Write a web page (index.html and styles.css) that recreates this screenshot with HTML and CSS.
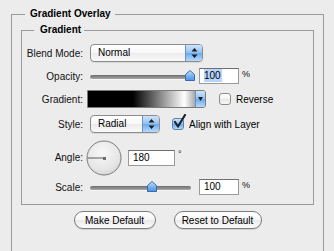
FILE: index.html
```html
<!DOCTYPE html>
<html lang="en">
<head>
    <meta charset="UTF-8">
    <meta name="viewport" content="width=device-width, initial-scale=1.0">
    <title>Gradient Overlay</title>
    <link rel="stylesheet" href="styles.css">
</head>
<body>
    <div class="group outer">
        <div class="legend">Gradient Overlay</div>
        <div class="group inner">
            <div class="legend">Gradient</div>

            <div class="row row-blend">
                <span class="label">Blend Mode:</span>
                <div class="popup popup-blend">
                    <span class="popup-text">Normal</span>
                    <span class="popup-arrows">
                        <svg width="7" height="10" viewBox="0 0 7 10"><path d="M3.5 0 L6.5 3.5 L0.5 3.5 Z M3.5 10 L6.5 6.5 L0.5 6.5 Z" fill="#1c1c1c"/></svg>
                    </span>
                </div>
            </div>

            <div class="row row-opacity">
                <span class="label">Opacity:</span>
                <div class="slider">
                    <div class="track"></div>
                    <svg class="thumb" style="left: 95px" width="10" height="11" viewBox="0 0 10 11">
                        <defs>
                            <linearGradient id="thumbA" x1="0" y1="0" x2="0" y2="1">
                                <stop offset="0" stop-color="#cfe5fb"/>
                                <stop offset="0.5" stop-color="#7db6f0"/>
                                <stop offset="1" stop-color="#4d95e6"/>
                            </linearGradient>
                        </defs>
                        <path d="M0.5 4.5 L5 0.5 L9.5 4.5 L9.5 10.5 L0.5 10.5 Z" fill="url(#thumbA)" stroke="#3d6aa6"/>
                    </svg>
                </div>
                <div class="field"><span class="selected">100</span></div>
                <span class="unit">%</span>
            </div>

            <div class="row row-gradient">
                <span class="label">Gradient:</span>
                <div class="swatch">
                    <div class="swatch-fill"></div>
                    <span class="swatch-arrow">
                        <svg width="5" height="4" viewBox="0 0 5 4"><path d="M0 0 L5 0 L2.5 4 Z" fill="#1c1c1c"/></svg>
                    </span>
                </div>
                <span class="check"></span>
                <span class="check-label">Reverse</span>
            </div>

            <div class="row row-style">
                <span class="label">Style:</span>
                <div class="popup popup-style">
                    <span class="popup-text">Radial</span>
                    <span class="popup-arrows">
                        <svg width="7" height="10" viewBox="0 0 7 10"><path d="M3.5 0 L6.5 3.5 L0.5 3.5 Z M3.5 10 L6.5 6.5 L0.5 6.5 Z" fill="#1c1c1c"/></svg>
                    </span>
                </div>
                <span class="check checked">
                    <svg width="15" height="16" viewBox="0 0 15 16"><path d="M3 8 L6 12.5 L13 1" fill="none" stroke="#1e2430" stroke-width="2.2" stroke-linecap="round" stroke-linejoin="round"/></svg>
                </span>
                <span class="check-label">Align with Layer</span>
            </div>

            <div class="row row-angle">
                <span class="label">Angle:</span>
                <svg class="dial" width="36" height="36" viewBox="0 0 36 36">
                    <defs>
                        <radialGradient id="dialFill" cx="0.45" cy="0.35" r="0.7">
                            <stop offset="0" stop-color="#f7f7f7"/>
                            <stop offset="0.7" stop-color="#e6e6e6"/>
                            <stop offset="1" stop-color="#d2d2d2"/>
                        </radialGradient>
                    </defs>
                    <circle cx="18" cy="18" r="17" fill="url(#dialFill)" stroke="#7c7c7c"/>
                    <line x1="1.5" y1="18" x2="18" y2="18" stroke="#5a5a5a"/>
                    <rect x="17" y="17" width="3" height="3" fill="#6e6e6e"/>
                </svg>
                <div class="field field-angle">180</div>
                <span class="degree">°</span>
            </div>

            <div class="row row-scale">
                <span class="label">Scale:</span>
                <div class="slider">
                    <div class="track"></div>
                    <svg class="thumb" style="left: 57px" width="10" height="11" viewBox="0 0 10 11">
                        <defs>
                            <linearGradient id="thumbB" x1="0" y1="0" x2="0" y2="1">
                                <stop offset="0" stop-color="#cfe5fb"/>
                                <stop offset="0.5" stop-color="#7db6f0"/>
                                <stop offset="1" stop-color="#4d95e6"/>
                            </linearGradient>
                        </defs>
                        <path d="M0.5 4.5 L5 0.5 L9.5 4.5 L9.5 10.5 L0.5 10.5 Z" fill="url(#thumbB)" stroke="#3d6aa6"/>
                    </svg>
                </div>
                <div class="field">100</div>
                <span class="unit">%</span>
            </div>
        </div>

        <div class="buttons">
            <button class="btn btn-make">Make Default</button>
            <button class="btn btn-reset">Reset to Default</button>
        </div>
    </div>
</body>
</html>
```

FILE: styles.css
```css
html, body {
    overflow: hidden;
}
body {
    margin: 0;
    background-color: #ececec;
    font-family: 'Liberation Sans', Arial, sans-serif;
    font-size: 10px;
    color: #111;
}
.group {
    border: 1px solid #9a9a9a;
}
.outer {
    margin: 14px 0 0 11px;
    width: 311px;
    height: 240px;
    border-bottom: none;
}
.inner {
    margin: 10px 9px 0 9px;
    padding-bottom: 9px;
}
.legend {
    width: fit-content;
    margin-top: -7px;
    line-height: 12px;
    font-weight: bold;
    color: #000;
    background-color: #ececec;
}
.outer > .legend {
    margin-left: 13px;
    padding: 0 4px 0 5px;
}
.inner > .legend {
    margin-left: 12px;
    padding: 0 3px 0 6px;
}
.row {
    display: flex;
    align-items: center;
}
.label {
    flex: none;
    width: 61px;
    text-align: right;
}
.row-blend {
    margin-top: 8px;
    height: 18px;
}
.row-opacity {
    margin-top: 6px;
    height: 16px;
}
.row-gradient {
    margin-top: 6px;
    height: 18px;
}
.row-style {
    margin-top: 7px;
    height: 18px;
}
.row-angle {
    margin-top: 7px;
    height: 35px;
}
.row-scale {
    margin-top: 4px;
    height: 16px;
}

/* popup buttons */
.popup {
    display: flex;
    height: 18px;
    box-sizing: border-box;
    margin-left: 7px;
    border: 1px solid #8c8c8c;
    border-radius: 4px;
    overflow: hidden;
    background: linear-gradient(#ffffff, #f7f7f7 50%, #ececec 51%, #f9f9f9);
    box-shadow: 0 1px 0 rgba(0, 0, 0, 0.08);
}
.popup-blend {
    width: 113px;
}
.popup-style {
    width: 70px;
}
.popup-text {
    flex: 1;
    padding-left: 7px;
    line-height: 16px;
    color: #000;
}
.popup-arrows {
    flex: none;
    width: 16px;
    display: flex;
    align-items: center;
    justify-content: center;
    border-left: 1px solid #6f8fbd;
    background: linear-gradient(#cfe4fa, #8fc0f3 50%, #6aa9ee 51%, #b7dafd);
}

/* sliders */
.slider {
    position: relative;
    flex: none;
    width: 101px;
    height: 4px;
    margin: 1px 8px 0 7px;
}
.track {
    height: 4px;
    border-radius: 2px;
    background: linear-gradient(#6d6d6d, #a8a8a8);
    box-shadow: 0 1px 0 rgba(255, 255, 255, 0.6);
}
.thumb {
    position: absolute;
    top: -5px;
}

/* text fields */
.field {
    flex: none;
    box-sizing: border-box;
    width: 40px;
    height: 16px;
    padding-left: 4px;
    line-height: 14px;
    border: 1px solid #9a9a9a;
    border-top-color: #6f6f6f;
    background-color: #fff;
    color: #000;
}
.field-angle {
    width: 47px;
    margin-left: 6px;
}
.selected {
    background-color: #b5d5ff;
    padding: 1px 1px 1px 0;
}
.unit {
    margin-left: 3px;
    font-size: 9px;
    align-self: flex-start;
    margin-top: 1px;
}
.degree {
    margin-left: 3px;
    font-size: 9px;
    align-self: flex-start;
    margin-top: 9px;
}

/* gradient swatch */
.swatch {
    display: flex;
    margin-left: 4px;
    width: 119px;
    height: 18px;
    box-sizing: border-box;
    border: 1px solid #7a7a7a;
    border-radius: 0 3px 3px 0;
    overflow: hidden;
}
.swatch-fill {
    flex: 1;
    background: linear-gradient(to right, #000 0, #000 42%, #fff 90%, #a9a9a9 100%);
}
.swatch-arrow {
    flex: none;
    width: 9px;
    display: flex;
    align-items: center;
    justify-content: center;
    border-left: 1px solid #6f8fbd;
    background: linear-gradient(#cfe4fa, #8fc0f3 50%, #6aa9ee 51%, #b7dafd);
}

/* checkboxes */
.check {
    position: relative;
    flex: none;
    width: 12px;
    height: 12px;
    box-sizing: border-box;
    margin-left: 13px;
    border: 1px solid #8c8c8c;
    border-radius: 3px;
    background: linear-gradient(#ffffff, #f3f3f3 50%, #e6e6e6 51%, #f8f8f8);
}
.check.checked {
    margin-left: 12px;
    border-color: #5f80b0;
    background: linear-gradient(#cfe4fa, #8fc0f3 50%, #6aa9ee 51%, #b7dafd);
}
.check svg {
    position: absolute;
    left: -1px;
    top: -5px;
}
.check-label {
    margin-left: 5px;
    color: #000;
}

/* angle */
.dial {
    flex: none;
    margin-left: 3px;
}

/* buttons */
.buttons {
    display: flex;
    justify-content: center;
    gap: 18px;
    margin-top: 6px;
}
.btn {
    height: 18px;
    padding: 0;
    border: 1px solid #7c7c7c;
    border-radius: 9px;
    background: linear-gradient(#ffffff, #f6f6f6 50%, #e9e9e9 51%, #fbfbfb);
    font-family: 'Liberation Sans', Arial, sans-serif;
    font-size: 10px;
    color: #000;
    box-shadow: 0 1px 1px rgba(0, 0, 0, 0.12);
}
.btn-make {
    width: 82px;
}
.btn-reset {
    width: 88px;
}
```
